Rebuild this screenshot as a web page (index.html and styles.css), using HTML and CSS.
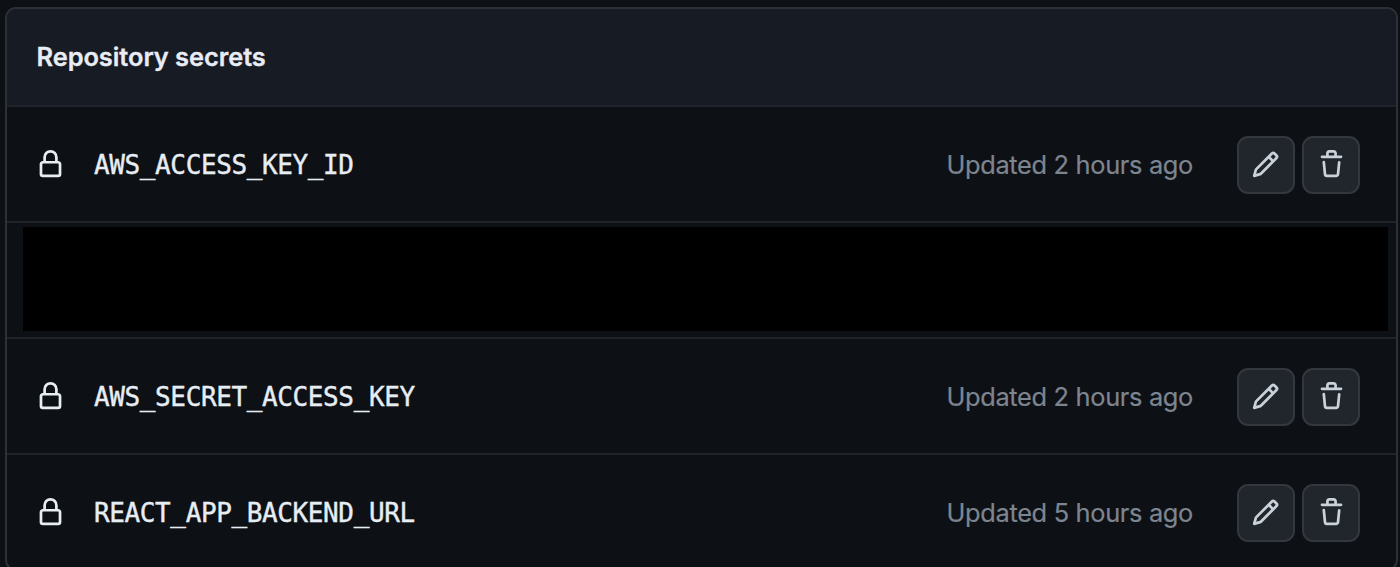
FILE: index.html
```
<!DOCTYPE html>
<html lang="en">
<head>
    <meta charset="utf-8">
    <title>Repository secrets</title>
    <link rel="stylesheet" href="styles.css">
</head>
<body>
    <svg class="sprite" aria-hidden="true">
        <symbol id="lock" viewBox="0 0 16 16">
            <path fill-rule="evenodd" d="M4 4a4 4 0 0 1 8 0v2h.25c.966 0 1.75.784 1.75 1.75v5.5A1.75 1.75 0 0 1 12.25 15h-8.5A1.75 1.75 0 0 1 2 13.25v-5.5C2 6.784 2.784 6 3.75 6H4Zm8.25 3.5h-8.5a.25.25 0 0 0-.25.25v5.5c0 .138.112.25.25.25h8.5a.25.25 0 0 0 .25-.25v-5.5a.25.25 0 0 0-.25-.25ZM10.5 6V4a2.5 2.5 0 1 0-5 0v2Z"/>
        </symbol>
        <symbol id="pencil" viewBox="0 0 16 16">
            <path fill-rule="evenodd" d="M11.013 1.427a1.75 1.75 0 012.474 0l1.086 1.086a1.75 1.75 0 010 2.474l-8.61 8.61c-.21.21-.47.364-.756.445l-3.251.93a.75.75 0 01-.927-.928l.929-3.25a1.75 1.75 0 01.445-.758l8.61-8.61zm1.414 1.06a.25.25 0 00-.354 0L10.811 3.75l1.439 1.44 1.263-1.263a.25.25 0 000-.354l-1.086-1.086zM11.189 6.25L9.75 4.81l-6.286 6.287a.25.25 0 00-.064.108l-.558 1.953 1.953-.558a.249.249 0 00.108-.064l6.286-6.286z"/>
        </symbol>
        <symbol id="trash" viewBox="0 0 16 16">
            <path fill-rule="evenodd" d="M11 1.75V3h2.25a.75.75 0 010 1.5H2.75a.75.75 0 010-1.5H5V1.75C5 .784 5.784 0 6.75 0h2.5C10.216 0 11 .784 11 1.75zM4.496 6.675a.75.75 0 10-1.492.15l.66 6.6A1.75 1.75 0 005.405 15h5.19c.9 0 1.652-.681 1.741-1.576l.66-6.6a.75.75 0 00-1.492-.149l-.66 6.6a.25.25 0 01-.249.225h-5.19a.25.25 0 01-.249-.225l-.66-6.6zM6.5 1.75a.25.25 0 01.25-.25h2.5a.25.25 0 01.25.25V3h-3V1.75z"/>
        </symbol>
    </svg>

    <div class="box">
        <div class="box-header">
            <h3>Repository secrets</h3>
        </div>
        <div class="box-row">
            <svg class="icon"><use href="#lock"/></svg>
            <code>AWS_ACCESS_KEY_ID</code>
            <span class="updated">Updated 2 hours ago</span>
            <button class="btn btn-edit" aria-label="Edit"><svg class="icon"><use href="#pencil"/></svg></button>
            <button class="btn" aria-label="Remove"><svg class="icon"><use href="#trash"/></svg></button>
        </div>
        <div class="box-row redacted">
            <div class="blackout"></div>
        </div>
        <div class="box-row">
            <svg class="icon"><use href="#lock"/></svg>
            <code>AWS_SECRET_ACCESS_KEY</code>
            <span class="updated">Updated 2 hours ago</span>
            <button class="btn btn-edit" aria-label="Edit"><svg class="icon"><use href="#pencil"/></svg></button>
            <button class="btn" aria-label="Remove"><svg class="icon"><use href="#trash"/></svg></button>
        </div>
        <div class="box-row">
            <svg class="icon"><use href="#lock"/></svg>
            <code>REACT_APP_BACKEND_URL</code>
            <span class="updated">Updated 5 hours ago</span>
            <button class="btn btn-edit" aria-label="Edit"><svg class="icon"><use href="#pencil"/></svg></button>
            <button class="btn" aria-label="Remove"><svg class="icon"><use href="#trash"/></svg></button>
        </div>
    </div>
</body>
</html>
```
FILE: styles.css
```
* {
    box-sizing: border-box;
}

body {
    margin: 0;
    height: 567px;
    padding: 7px 2px 0 5px;
    overflow: hidden;
    background-color: #0d1015;
    color: #e6edf3;
    font-family: Inter, "Liberation Sans", sans-serif;
}

.sprite {
    display: none;
}

.box {
    height: 564px;
    border: 2px solid #2d3137;
    border-radius: 11px;
    overflow: hidden;
}

.box-header {
    display: flex;
    align-items: center;
    height: 96px;
    padding: 0 29.5px 2px;
    background-color: #171b23;
}

.box-header h3 {
    margin: 0;
    font-size: 25.4px;
    font-weight: 600;
    letter-spacing: -0.05px;
    color: #e8ecf5;
    -webkit-text-stroke: 0.3px currentColor;
}

.box-row {
    display: flex;
    align-items: center;
    height: 116px;
    padding: 1px 36px 0 29px;
    border-top: 2px solid #20242a;
}

.icon {
    display: block;
    flex: none;
    width: 29px;
    height: 29px;
    fill: currentColor;
}

.box-row code {
    margin-left: 29px;
    font-family: "DejaVu Sans Mono", monospace;
    font-size: 26px;
    letter-spacing: -0.38px;
    -webkit-text-stroke: 0.4px currentColor;
}

.updated {
    margin-left: auto;
    margin-right: 44px;
    font-size: 25.4px;
    letter-spacing: -0.33px;
    color: #7d8590;
    -webkit-text-stroke: 0.2px currentColor;
}

.btn {
    display: flex;
    align-items: center;
    justify-content: center;
    width: 58px;
    height: 58px;
    padding: 0;
    border: 2px solid #34383e;
    border-radius: 11px;
    background-color: #21252c;
    color: #c9d1d9;
}

.btn + .btn {
    margin-left: 7px;
}

.btn-edit {
    padding-right: 1px;
}

.redacted {
    align-items: flex-start;
    padding: 4px 8px 0 16px;
}

/* covers the whole row, name and buttons */
.blackout {
    flex: 1;
    height: 104px;
    background-color: #000;
}
```
